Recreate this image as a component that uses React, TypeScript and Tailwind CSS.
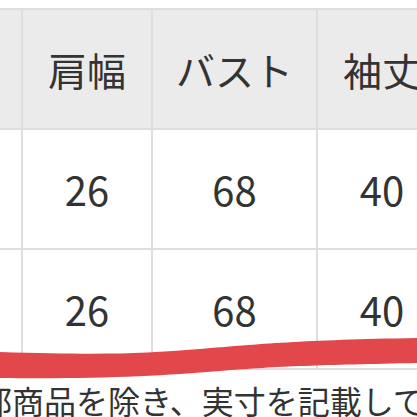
const font = { fontFamily: '"Noto Sans CJK JP", "Noto Sans", sans-serif' };

const header = ["", "肩幅", "バスト", "袖丈"];
const rows = [
  ["", "26", "68", "40"],
  ["", "26", "68", "40"],
];

export default function App() {
  return (
    <div className="relative h-[417px] w-[417px] overflow-hidden bg-white text-[#333333]" style={font}>
      <div className="pt-[8px]">
        <div className="ml-[-79px] grid w-max grid-cols-[98px_128px_163px_128px] gap-[2px] bg-[#dedede] p-[2px]">
          {header.map((h, i) => (
            <div key={i} className="flex h-[118px] items-center justify-center bg-[#ebebeb] text-[39px] leading-none">
              {h}
            </div>
          ))}
          {rows.map((r, ri) =>
            r.map((c, ci) => (
              <div key={`${ri}-${ci}`} className="flex h-[118px] items-center justify-center bg-white text-[40px] leading-none">
                {c}
              </div>
            ))
          )}
        </div>
        <div className="ml-[-20px] mt-[14px] whitespace-nowrap text-[32px] leading-none text-[#333333]">
          部商品を除き、実寸を記載しています。
        </div>
      </div>

      {/* red marker stroke */}
      <svg className="pointer-events-none absolute left-0 top-0" width="417" height="417" viewBox="0 0 417 417">
        <path
          d="M0,352 C100,355 140,354 200,349 C260,344 300,340 417,338 L417,363 C320,365 280,366 220,371 C160,376 100,379 0,378 Z"
          fill="#e2474c"
        />
      </svg>
    </div>
  );
}
